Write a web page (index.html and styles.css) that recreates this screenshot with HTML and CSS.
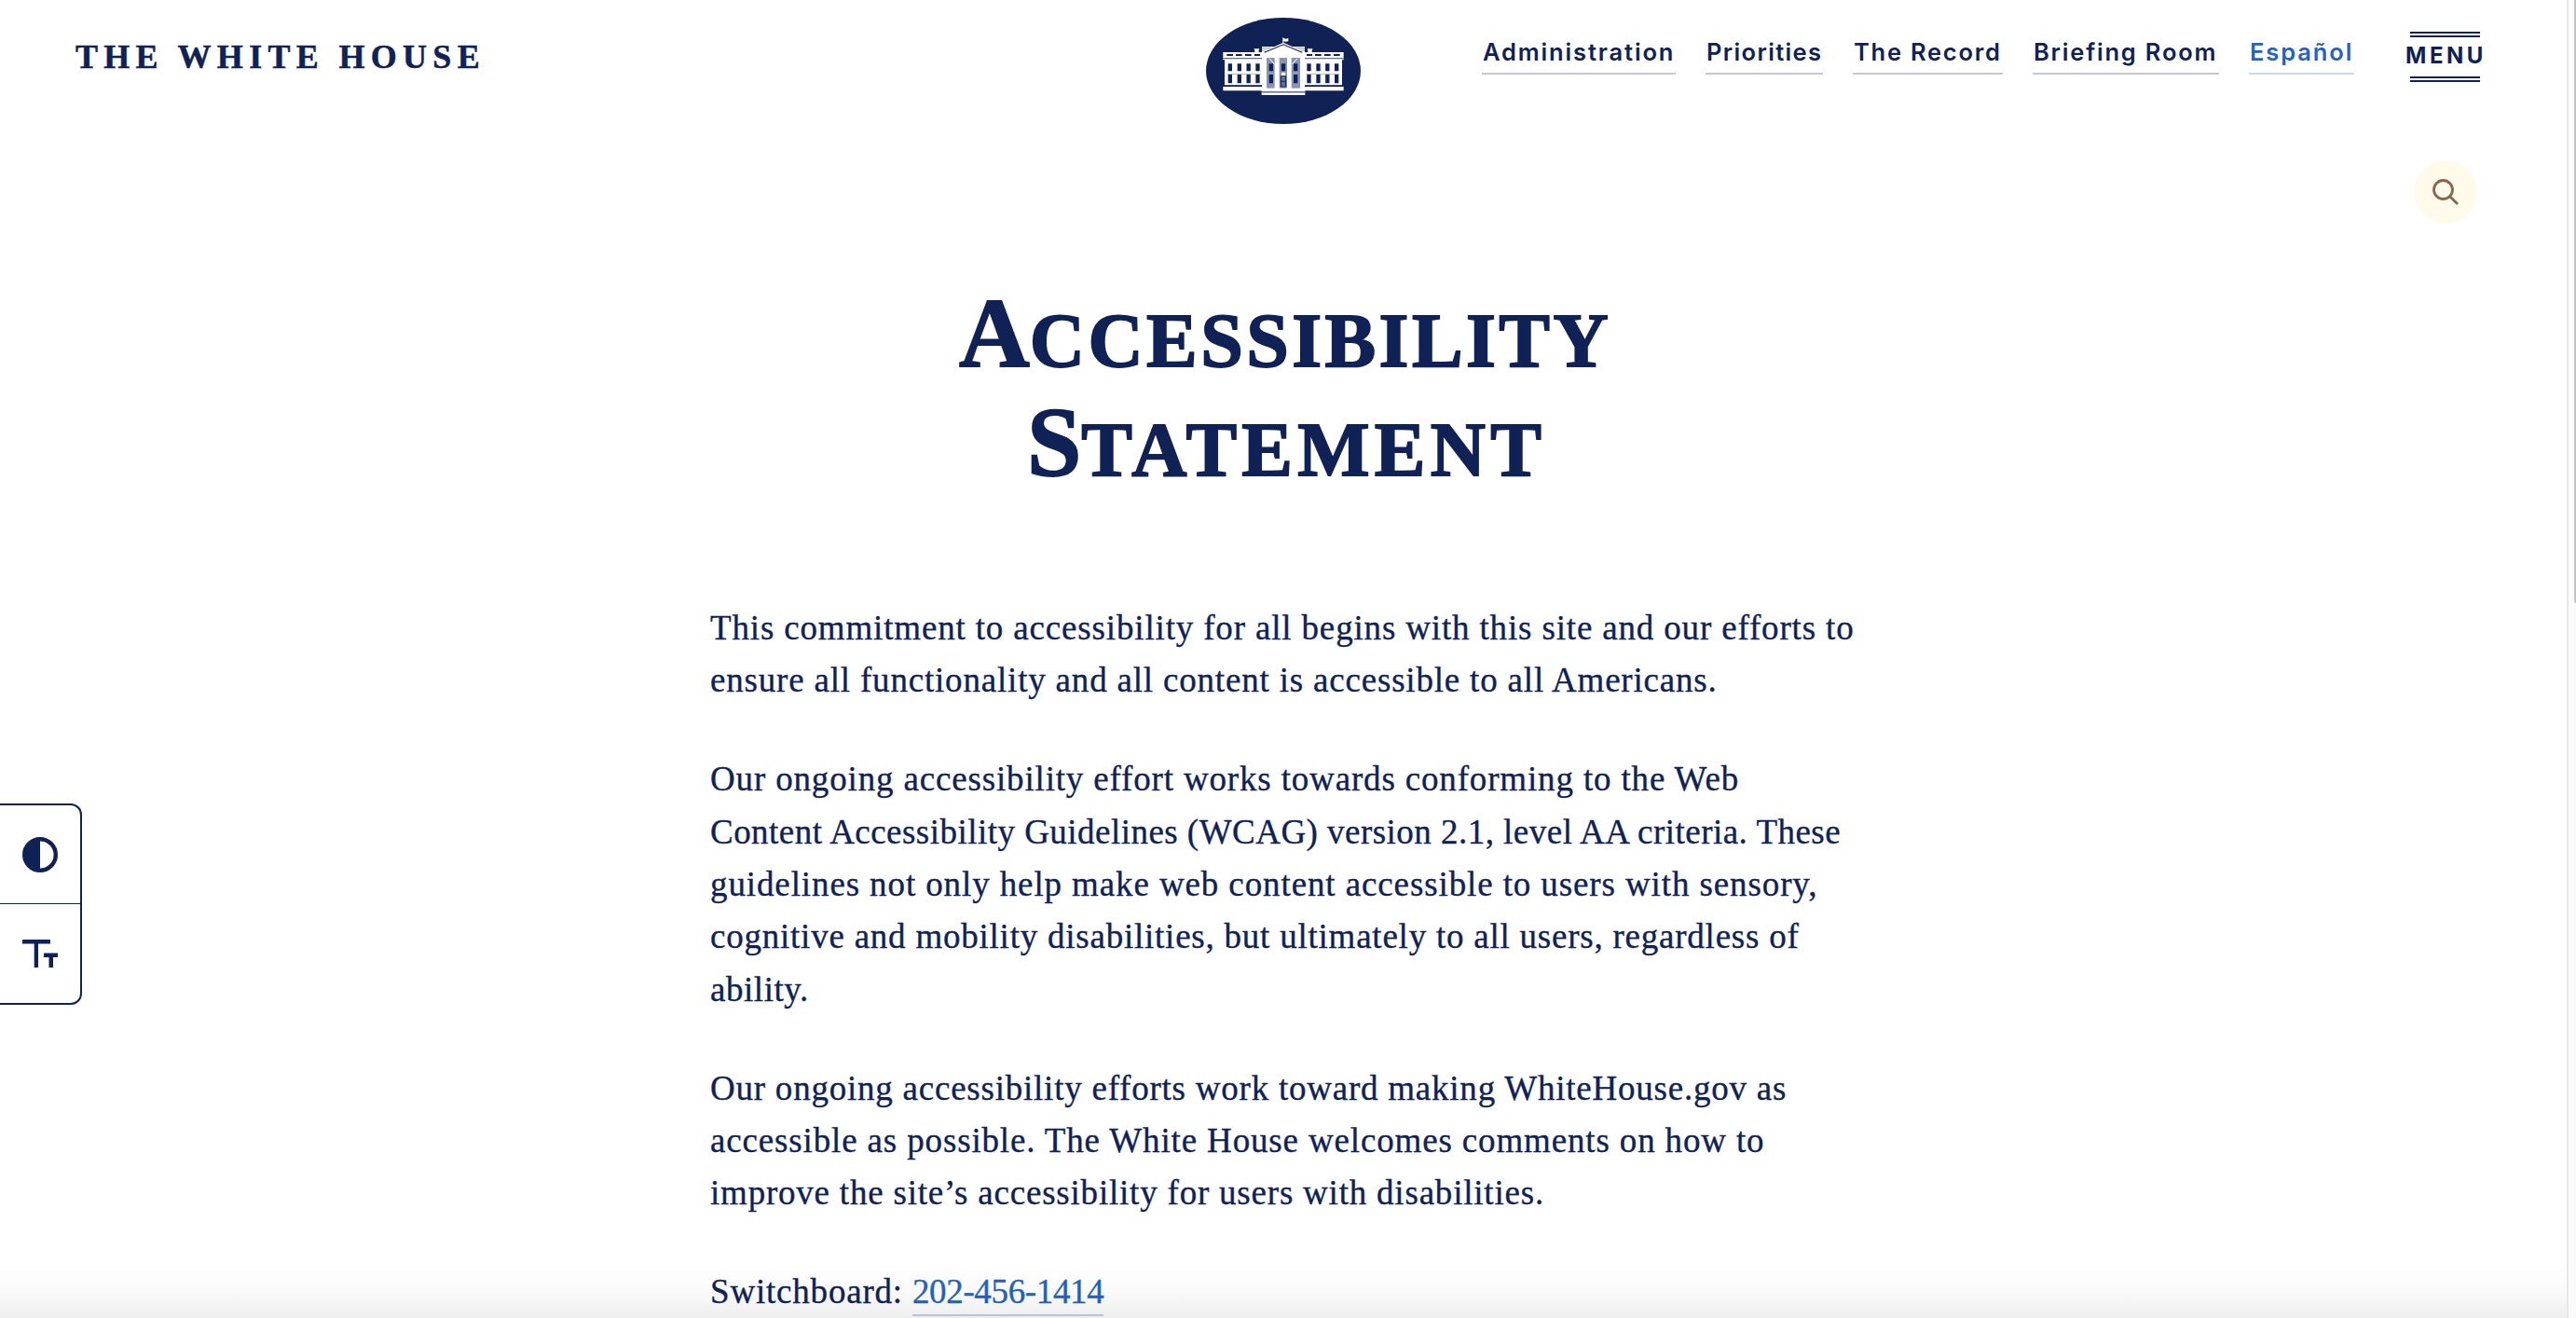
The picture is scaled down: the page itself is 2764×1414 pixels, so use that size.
FILE: index.html
```html
<!DOCTYPE html>
<html lang="en">
<head>
<meta charset="utf-8">
<title>Accessibility Statement | The White House</title>
<link rel="stylesheet" href="styles.css">
</head>
<body>
<div class="page">
  <header class="header">
    <a class="brand">THE WHITE HOUSE</a>
    <svg class="logo" viewBox="42 27 498 342">
      <ellipse cx="291" cy="198" rx="249" ry="171" fill="#102255"/>
      <!-- flag -->
      <path d="M289 91h3v20h-3z M292 93l7 2 8-2v10l-8 1-7-1z" fill="#fff"/>
      <!-- roof -->
      <path d="M196 127h18l-2 5v7h-13v-7z M368 127h18l-3 5v7h-13v-7z" fill="#fff"/>
      <path d="M222 120h138v20h-138z" fill="#fff"/>
      <path d="M222 125h45M315 125h45M222 132h24M336 132h24" stroke="#8c96b4" stroke-width="3"/>
      <!-- wings -->
      <path d="M97 138h388v25h-388z M102 163h378v82h-378z" fill="#fff"/>
      <path d="M109 147h20M138 147h20M168 147h20M198 147h18M366 147h18M393 147h20M423 147h20M453 147h20" stroke="#102255" stroke-width="6"/>
      <path d="M97 158h125M360 158h125" stroke="#64709a" stroke-width="4"/>
      <g stroke="#102255" stroke-width="13">
        <path d="M119.500 175v24M149.500 175v24M179 175v24M208.500 175v24M373.500 175v24M403.500 175v24M433 175v24M462.500 175v24"/>
        <path d="M119.500 209v29M149.500 209v29M179 209v29M208.500 209v29M373.500 209v29M403.500 209v29M433 209v29M462.500 209v29"/>
      </g>
      <path d="M110 208h108M364 208h108" stroke="#aab2c8" stroke-width="3"/>
      <path d="M97 249h388v13h-388z" fill="#fff"/>
      <path d="M97 245.500h388" stroke="#102255" stroke-width="4"/>
      <!-- portico -->
      <path d="M222 152h138v98h-138z" fill="#fff"/>
      <path d="M222 150V138l69-31 69 31v14z" fill="#fff"/>
      <path d="M230 138.500l61-25 61 25" fill="none" stroke="#102255" stroke-width="3.500"/>
      <path d="M246 138l45-18 45 18z" fill="#fff"/>
      <path d="M237 156h26v98h-26z M278 156h25v98h-25z M317 156h28v98h-28z" fill="#8994b3"/>
      <path d="M246 158l17 19M336 158l-17 19" stroke="#fff" stroke-width="3"/>
      <path d="M251.500 175v24M251.500 205v33M291 175v24M330.500 175v24M330.500 205v33" stroke="#102255" stroke-width="13"/>
      <path d="M244 207h15M323 207h15M286 205h10v10h-10z" stroke="#fff" stroke-width="3" fill="#fff"/>
      <path d="M283 215h16v34h-16z" fill="#64709a" stroke="#102255" stroke-width="3"/>
      <path d="M283 232h16" stroke="#102255" stroke-width="3"/>
      <path d="M221 254h140v22h-140z" fill="#fff"/>
      <path d="M221 266.500h140" stroke="#102255" stroke-width="3"/>
    </svg>
    <nav class="nav">
      <a class="nav-item nav-admin">Administration</a>
      <a class="nav-item nav-priorities">Priorities</a>
      <a class="nav-item nav-record">The Record</a>
      <a class="nav-item nav-briefing">Briefing Room</a>
      <a class="nav-item nav-lang">Español</a>
    </nav>
    <div class="menu">
      <i class="rule"></i>
      <span class="menu-label">MENU</span>
      <i class="rule"></i>
    </div>
  </header>
  <div class="search-row">
    <div class="search">
      <svg class="search-icon" viewBox="0 0 30 30" fill="none" stroke="#846653" stroke-width="2.800">
        <circle cx="12.500" cy="12.500" r="10"/><path d="M19.500 19.500l8.500 8.500"/>
      </svg>
    </div>
  </div>
  <main>
    <h1 class="title">
      <span class="title-line title-first">Accessibility</span>
      <span class="title-line title-second">Statement</span>
    </h1>
    <div class="copy">
      <p><span class="line l1">This commitment to accessibility for all begins with this site and our efforts to</span>
      <span class="line l2">ensure all functionality and all content is accessible to all Americans.</span></p>
      <p><span class="line l3">Our ongoing accessibility effort works towards conforming to the Web</span>
      <span class="line l4">Content Accessibility Guidelines (WCAG) version 2.1, level AA criteria. These</span>
      <span class="line l5">guidelines not only help make web content accessible to users with sensory,</span>
      <span class="line l6">cognitive and mobility disabilities, but ultimately to all users, regardless of</span>
      <span class="line l7">ability.</span></p>
      <p><span class="line l8">Our ongoing accessibility efforts work toward making WhiteHouse.gov as</span>
      <span class="line l9">accessible as possible. The White House welcomes comments on how to</span>
      <span class="line l10">improve the site’s accessibility for users with disabilities.</span></p>
      <p><span class="line l11">Switchboard: <a class="phone">202-456-1414</a></span></p>
    </div>
  </main>
</div>
<aside class="tools">
  <div class="tool">
    <svg width="38" height="38" viewBox="0 0 38 38">
      <circle cx="19" cy="19" r="16.800" fill="none" stroke="#102255" stroke-width="4.400"/>
      <path d="M19 2a17 17 0 0 0 0 34z" fill="#102255"/>
    </svg>
  </div>
  <div class="tool">
    <svg width="38" height="30" viewBox="0 0 38 30">
      <path d="M0 0h30v4.500H17V30h-4.300V4.500H0z M23 14.500h15v4.500h-5V30h-4.500V19H23z" fill="#102255"/>
    </svg>
  </div>
</aside>
<div class="shade"></div>
<div class="scrollbar"><div class="thumb"></div></div>
</body>
</html>
```
FILE: styles.css
```css
* { box-sizing: border-box; }
html, body { margin: 0; height: 1414px; overflow: hidden; background: #fff; }
body { position: relative; color: #102255; font-family: "Liberation Serif", serif; }
.page { width: 2754px; height: 1414px; overflow: hidden; }

.header { display: flex; align-items: flex-start; height: 172px; padding-left: 81px; }
.brand { width: 1213px; padding-top: 41px; font-size: 36px; line-height: 40px; font-weight: 700; letter-spacing: 6.3px; white-space: nowrap; -webkit-text-stroke: .5px; }
.logo { display: block; width: 166px; height: 114px; margin-top: 19px; }

.nav { display: flex; gap: 32px; margin: 38px 0 0 130px; font: 600 25.5px/36px Inter, sans-serif; }
.nav-item { height: 42px; border-bottom: 2px solid #c3c8d5; white-space: nowrap; padding-left: 1px; }
.nav-admin { width: 208px; letter-spacing: 1.85px; }
.nav-priorities { width: 126px; letter-spacing: 1.35px; }
.nav-record { width: 161px; letter-spacing: 1.75px; }
.nav-briefing { width: 200px; letter-spacing: 1.8px; }
.nav-lang { width: 113px; letter-spacing: 1.9px; color: #2663bc; border-color: #c8d8ee; }

.menu { display: flex; flex-direction: column; align-items: center; width: 90px; margin: 34px 0 0 52px; }
.rule { width: 75px; height: 6px; border: solid #102255; border-width: 2px 0; }
.menu-label { height: 42px; padding: 3px 0 0 3px; font: 700 24px/34px Inter, sans-serif; letter-spacing: 3.5px; white-space: nowrap; }

.search-row { display: flex; justify-content: flex-end; padding-right: 96px; height: 68px; }
.search { display: flex; width: 68px; height: 68px; padding: 19px 0 0 19px; border-radius: 50%; background: #fffaea; }
.search-icon { width: 30px; height: 30px; }

.title { margin: 67px 0 0; height: 339px; padding-left: 4px; font-size: 82px; line-height: 117px; font-weight: 700; text-align: center; text-transform: uppercase; -webkit-text-stroke: 1.8px; }
.title-line { display: block; }
.title-line::first-letter { font-size: 105px; line-height: 53px; letter-spacing: 0; }
.title-first { letter-spacing: 3.4px; }
.title-second { letter-spacing: 5.2px; padding-left: 3px; }

.copy { width: 1260px; margin-left: 762px; font-size: 37px; line-height: 56.3px; -webkit-text-stroke: .35px; }
.copy p { margin: 0 0 49.8px; }
.line { display: block; white-space: nowrap; }
.l1 { letter-spacing: .84px; }
.l2 { letter-spacing: .81px; }
.l3 { letter-spacing: .84px; }
.l4 { letter-spacing: .47px; }
.l5 { letter-spacing: .89px; }
.l6 { letter-spacing: .77px; }
.l7 { letter-spacing: .55px; }
.l8 { letter-spacing: .77px; }
.l9 { letter-spacing: .85px; }
.l10 { letter-spacing: .79px; }
.l11 { letter-spacing: .8px; }
.phone { display: inline-block; height: 54px; color: #2663bc; letter-spacing: -.35px; border-bottom: 2px solid #c0d2ea; }

.tools { position: absolute; left: 0; top: 862px; width: 88px; height: 216px; border: 2px solid #102255; border-left: 0; border-radius: 0 12px 12px 0; background: #fff; }
.tool { display: flex; align-items: center; height: 106px; padding-left: 24px; }
.tool:first-child { border-bottom: 1px solid #102255; }

.shade { position: absolute; left: 0; bottom: 0; width: 2764px; height: 60px; background: linear-gradient(rgba(0,0,0,0), rgba(0,0,0,.02) 50%, rgba(0,0,0,.065)); }
.scrollbar { position: absolute; right: 0; top: 0; width: 10px; height: 1414px; border-left: 2px solid #e7e7e7; background: #fafafa; }
.thumb { width: 2px; height: 647px; margin-left: 6px; background: #c1c1c1; border-bottom-left-radius: 2px; }
```
